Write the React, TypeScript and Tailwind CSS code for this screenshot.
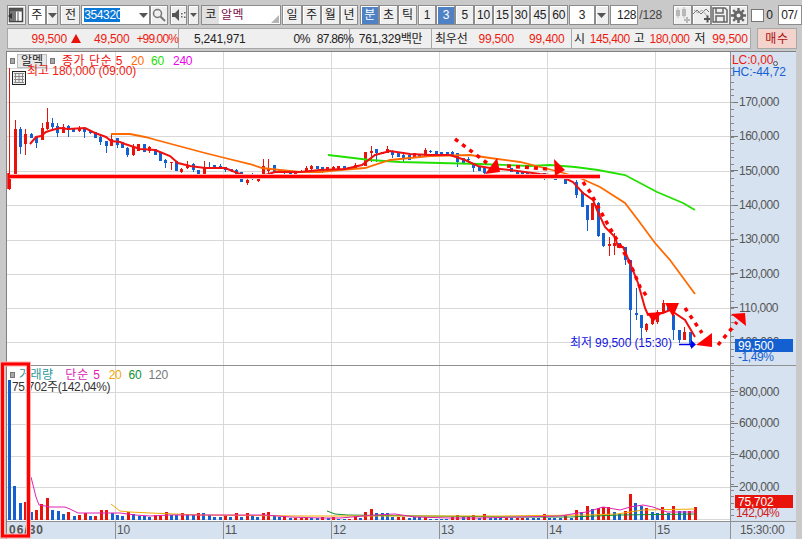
import React from "react";

const RED = "#e8140c";
const BLUE = "#1560d0";
const F = "font-['Liberation_Sans','Noto_Sans_CJK_KR',sans-serif]";

// x, bodyTop, bodyBottom, wickTop, wickBottom, r=red b=blue
type C = [number, number, number, number, number, "r" | "b"];
const candles: C[] = [
  [9,175,189,68,190,"r"],[14.5,129,175,120,177,"r"],[19.5,129,147,127,154,"b"],[25,134,144,129,155,"r"],[30.5,134,138,133,138,"b"],
  [36,137,143,136,148,"b"],[41.5,128,140,123,138,"r"],[46.5,122,129,108,130,"r"],[52,123,127,118,131,"b"],[57,126,133,123,137,"b"],
  [63,127,133,124,133,"r"],[68,126,130,125,137,"b"],[73,129,132,128,132,"b"],[79,128,131,126,132,"r"],[84,129,132,128,138,"b"],
  [90,131,133,130,134,"b"],[95,132,138,132,138,"b"],[100,137,142,136,145,"b"],[106,141,146,141,153,"b"],[111,139,146,135,146,"r"],
  [117,138,145,138,148,"b"],[122,142,148,142,148,"b"],[127,148,155,147,157,"b"],[133,147,155,144,156,"r"],[138,144,151,144,151,"r"],
  [144,144,152,144,152,"b"],[149,147,151,146,153,"r"],[155,149,155,149,155,"b"],[160,152,161,152,161,"b"],[165,160,163,159,168,"b"],
  [171,162,163,162,170,"r"],[176,161,171,161,171,"b"],[181,169,172,168,173,"r"],[187,165,168,161,169,"r"],[193,164,170,163,172,"b"],
  [198,170,174,170,174,"b"],[204,168,175,161,175,"r"],[209,167,169,162,169,"b"],[214,165,169,165,169,"b"],[220,166,169,164,169,"b"],
  [225,167,170,167,172,"b"],[231,169,171,169,172,"b"],[236,170,174,169,178,"b"],[241,172,182,172,182,"b"],[247,180,183,178,185,"r"],
  [252,176,177,173,180,"b"],[258,176,181,175,182,"r"],[263,166,176,159,178,"r"],[268,168,171,159,175,"r"],[274,165,172,165,172,"b"],
  [279,170,172,170,172,"r"],[284,171,173,170,175,"b"],[290,172,175,172,175,"b"],[295,173,175,172,175,"r"],[301,171,173,170,173,"r"],
  [306,168,173,166,173,"r"],[311,166,169,165,170,"r"],[317,166,169,166,169,"b"],[322,167,172,167,173,"b"],[327,167,171,167,171,"r"],
  [333,167,171,166,171,"r"],[338,166,169,166,169,"r"],[344,166,170,166,170,"b"],[349,167,169,167,169,"r"],[355,165,168,163,168,"r"],
  [365,152,166,152,166,"r"],[371,151,153,146,162,"r"],[376,149,153,149,162,"b"],[382,152,154,152,154,"r"],[387,149,153,146,153,"r"],
  [392,151,155,150,158,"b"],[398,152,157,152,157,"b"],[403,155,158,153,162,"b"],[409,155,160,155,160,"b"],[414,153,158,153,158,"r"],
  [419,154,157,154,157,"b"],[425,150,156,148,156,"r"],[430,151,152,150,153,"b"],[436,151,155,151,155,"b"],[441,152,156,152,156,"b"],
  [447,152,156,152,156,"b"],[452,152,155,151,156,"b"],[457,153,162,153,167,"b"],[463,158,163,158,163,"b"],[468,159,160,157,164,"b"],
  [473,163,168,163,172,"b"],[479,167,171,167,171,"b"],[484,168,173,168,175,"b"],[511,168,172,168,172,"b"],[517,172,174,172,174,"b"],
  [522,172,174,172,174,"b"],[527,172,174,172,174,"b"],[544,173,175,173,180,"b"],[555,177,180,177,180,"b"],[565,178,184,178,184,"b"],
  [576,182,195,180,198,"b"],[582,192,207,192,207,"b"],[587,205,220,205,231,"b"],[592,203,220,203,220,"r"],[598,203,236,202,237,"b"],
  [603,233,246,233,247,"b"],[609,244,246,237,256,"r"],[614,243,246,233,255,"r"],[619,243,248,243,248,"b"],[625,247,260,247,265,"b"],
  [630,260,310,260,340,"b"],[636,313,315,288,320,"b"],[641,315,328,315,338,"b"],[646,324,330,323,332,"r"],[652,315,324,313,325,"r"],
  [657,312,322,310,324,"r"],[663,303,313,300,313,"r"],[668,304,310,303,310,"b"],[673,315,330,310,340,"b"],[679,330,340,330,343,"b"],
  [684,332,340,327,340,"r"],[690,332,345,332,347,"b"],
];

const vol: number[] = [
  -140,-34,-17,18,-8,10,16,22,-10,-9,-6,8,-4,5,7,-4,4,10,10,-7,-5,-4,8,-6,-4,-4,-3,5,4,8,-5,-5,7,-5,-5,7,-7,-5,-3,-3,4,-3,7,
  -3,7,-4,-3,7,8,-4,-3,4,-2,2,2,2,-2,-2,3,-2,3,-1,-1,1,4,-2,8,11,-7,-7,-7,-3,3,3,-2,-3,-3,3,-1,-1,-1,-1,3,5,-3,3,5,-2,6,-2,-2,-2,2,-2,2,
  2,-2,-2,-2,6,-2,-2,-2,5,-2,10,-8,14,-11,12,13,13,-8,-6,9,26,-17,-14,12,-8,-7,13,-7,14,-9,-9,9,13,
];

const ma5 = "30,144 36,137 41,136 46,132 52,130 60,128 68,129 85,128 95,133 106,137 111,141 120,142 125,144 140,149 155,150 160,152 170,156 178,163 190,166 205,168 225,168 240,174 250,177 262,176 275,172 290,172 300,172 320,170 345,169 362,165 375,155 390,151 410,154 430,155 450,155 465,160 478,166 490,168 510,170 540,174 560,176 573,182 583,193 593,200 597,210 605,227 615,237 618,247 623,247 630,263 638,283 645,308 648,315 663,313 670,310 685,320 695,337";
const ma20 = "111,134 130,134 145,137 160,141 175,145 190,149 205,153 225,158 250,164 262,168 280,170 300,172 320,172 340,170 365,168 390,160 410,158 430,156 470,155 490,158 520,162 560,172 580,178 600,187 625,203 638,220 655,243 670,260 695,294";
const ma60 = "328,155 345,157 370,160 400,162 440,163 480,164 530,166 550,165 575,167 598,170 625,175 657,192 683,203 695,210";

const vm5 = "31,477 36,497 39,505 45,506 50,507 65,507 70,509 78,513 120,513 135,515 150,516 170,515 240,515 265,515 290,517 320,518 340,518 375,515 395,514 415,517 450,518 480,518 520,517 560,516 578,513 587,512 603,507 620,510 630,507 643,505 653,507 667,512 695,512";
const vm20 = "111,504 120,511 130,512 150,513 200,515 300,516 400,516 500,516 587,515 617,514 643,510 695,509";
const vm60 = "327,511 335,514 347,515 423,516 520,517 570,517 620,515 695,514";

const Btn = ({ w, children, active, className = "" }: { w: string; children?: React.ReactNode; active?: boolean; className?: string }) => (
  <div className={`${w} h-full flex items-center justify-center border border-[#8c8c8c] shadow-[inset_1px_1px_0_#fff] ${active ? "bg-[#4f82c4] text-white" : "bg-[#efefef] text-[#222]"} ${className}`}>
    {children}
  </div>
);

const Down = () => (
  <svg width="9" height="5" viewBox="0 0 9 5"><path d="M0 0h9L4.5 5z" fill="#555" /></svg>
);

const R = ({ children, className = "" }: { children: React.ReactNode; className?: string }) => (
  <span className={`text-[#ee1a10] ${className}`}>{children}</span>
);

const priceTicks = Array.from({ length: 44 }, (_, i) => 16 + i * 6.86);
const volTicks = Array.from({ length: 24 }, (_, i) => 4 + i * 6.32);

export default function App() {
  const prices = ["170,000", "160,000", "150,000", "140,000", "130,000", "120,000", "110,000", "100,000"];
  return (
    <div className={`relative w-[802px] h-[539px] overflow-hidden bg-[#c9c9c9] text-[12px] leading-none tracking-[-0.2px] ${F}`}>
      {/* toolbar */}
      <div className="flex h-[20px] mt-[5px] ml-[7px] items-stretch">
        <Btn w="w-[19px]">
          <svg width="16" height="16" viewBox="0 0 16 16"><rect x="1.5" y="1.5" width="13" height="13" fill="#fff" stroke="#444" strokeWidth="1.5" /><rect x="1.5" y="1.5" width="13" height="3" fill="#555" /><rect x="2" y="4" width="6" height="10" fill="#777" /><path d="M0 9l4-3v6z" fill="#333" /><path d="M10 5v9" stroke="#555" /></svg>
        </Btn>
        <Btn w="w-[18px] ml-[2px] bg-white!">주</Btn>
        <Btn w="w-[13px]"><Down /></Btn>
        <Btn w="w-[20px] ml-[2px]">전</Btn>
        <div className="w-[69px] ml-[1px] bg-white border border-[#8c8c8c] flex items-center pl-[2px] justify-between">
          <span className="bg-[#0a78d7] text-white h-[14px] flex items-center w-[36px] tracking-[-0.4px]">354320</span>
          <span className="w-[11px] flex justify-center"><Down /></span>
        </div>
        <Btn w="w-[19px]">
          <svg width="14" height="14" viewBox="0 0 14 14" fill="none" stroke="#777" strokeWidth="1.5"><circle cx="5.5" cy="5.5" r="4" /><path d="M8.5 8.5l4.5 4.5" strokeWidth="2" /></svg>
        </Btn>
        <Btn w="w-[17px] ml-[2px]">
          <svg width="14" height="12" viewBox="0 0 14 12"><path d="M0 4h3l4-4v12L3 8H0z" fill="#555" /><path d="M9 4h1.5v1.5H9zM12 3h1.500v1.500H12zM9 7h1.500v1.500H9zM12 7.500h1.500V9H12z" fill="#666" /></svg>
        </Btn>
        <Btn w="w-[11px] ml-[1px]"><svg width="7" height="4" viewBox="0 0 9 5"><path d="M0 0h9L4.5 5z" fill="#555" /></svg></Btn>
        <div className="relative w-[81px] ml-[2px] bg-white border border-[#8c8c8c] flex items-center">
          <span className="w-[17px] h-full bg-[#e0e0e0] flex items-center justify-center text-[#222]">코</span>
          <span className="ml-[2px] text-[#7a0f48] tracking-[0.4px]">알멕</span>
          <svg className="absolute right-[1px] bottom-[1px]" width="8" height="8" viewBox="0 0 8 8"><path d="M8 0v8H0z" fill="#b5b5b5" /></svg>
        </div>
        <Btn w="w-[20px] ml-[1px]">일</Btn>
        <Btn w="w-[19px]">주</Btn>
        <Btn w="w-[19px]">월</Btn>
        <Btn w="w-[19px]">년</Btn>
        <Btn w="w-[19px] ml-[2px]" active>분</Btn>
        <Btn w="w-[19px]">초</Btn>
        <Btn w="w-[19px]">틱</Btn>
        <div className="w-px" />
        {["1", "3", "5", "10", "15", "30", "45", "60"].map((t) => (
          <Btn key={t} w="w-[19px]" active={t === "3"}>{t}</Btn>
        ))}
        <div className="w-[26px] ml-[1px] bg-white border border-[#8c8c8c] flex items-center justify-center text-[#222]">3</div>
        <Btn w="w-[14px]"><Down /></Btn>
        <div className="w-[29px] ml-[1px] bg-white border border-[#8c8c8c] flex items-center justify-end pr-[1px] text-[#222]">128</div>
        <span className="w-[33px] flex items-center pl-[1px] text-[#444]">/128</span>
        <Btn w="w-[19px] ml-[2px]">
          <svg width="16" height="16" viewBox="0 0 16 16" fill="#b8b8b8"><rect x="2" y="3" width="4" height="6" /><rect x="8" y="2" width="4" height="7" /><path d="M3.500 1h1v10h-1zM9.500 0h1v11h-1z" /><path d="M10 12h2v-2h2v2h2v2h-2v2h-2v-2h-2z" /></svg>
        </Btn>
        <Btn w="w-[19px]">
          <svg width="17" height="16" viewBox="0 0 17 16"><path d="M0 7l4-4 4 4 5-5 3 3" fill="none" stroke="#777" /><path d="M1 3l4 3 4-3 5 6" fill="none" stroke="#aaa" /><path d="M11 11h2.500V8.500h2V11H18v2h-2.500v2.500h-2V13H11z" fill="#555" /></svg>
        </Btn>
        <Btn w="w-[19px]">
          <svg width="16" height="16" viewBox="0 0 16 16" fill="none" stroke="#666" strokeWidth="1.500"><path d="M1 1h12l2 2v12H1z" /><path d="M4 1v5h7V1M4 15V9h8v6" /></svg>
        </Btn>
        <Btn w="w-[19px]">
          <svg width="15" height="15" viewBox="0 0 15 15"><circle cx="7.500" cy="7.500" r="3.500" fill="none" stroke="#666" strokeWidth="3" /><path d="M7.500 0v3M7.500 12v3M0 7.500h3M12 7.500h3M2.200 2.200l2 2M10.800 10.800l2 2M2.200 12.800l2-2M10.800 4.200l2-2" stroke="#666" strokeWidth="2.400" /></svg>
        </Btn>
        <div className="w-[13px] h-[13px] ml-[3px] self-center bg-white border border-[#777]" />
        <span className="w-[10px] ml-[2px] flex items-center text-[#222]">0</span>
        <div className="w-[24px] ml-[2px] bg-white border border-[#8c8c8c] flex items-center pl-[2px] overflow-hidden text-[#222]">07/</div>
      </div>

      {/* info row */}
      <div className="flex h-[21px] mt-[3px] ml-[7px] items-stretch">
        <div className="w-[744px] flex bg-[#efefef] border border-[#a8a8a8] whitespace-nowrap">
          <div className="w-[171px] flex items-center border-r border-[#a8a8a8] text-[#ee1a10]">
            <span className="w-[59px] text-right">99,500</span>
            <svg className="ml-[4px]" width="10" height="9" viewBox="0 0 10 9"><path d="M5 0l5 9H0z" fill={RED} /></svg>
            <span className="ml-[13px]">49,500</span>
            <span className="ml-[7px] tracking-[-0.9px]">+99.00%</span>
          </div>
          <div className="w-[171px] flex items-center border-r border-[#a8a8a8] text-[#222]">
            <span className="ml-[15px]">5,241,971</span>
            <span className="ml-[48px] tracking-[-0.6px]">0%</span>
            <span className="ml-[7px] tracking-[-0.7px]">87.86%</span>
          </div>
          <div className="w-[82px] flex items-center justify-center border-r border-[#a8a8a8] text-[#222]">761,329백만</div>
          <div className="w-[140px] flex items-center border-r border-[#a8a8a8]">
            <span className="ml-[3px] text-[#222]">최우선</span>
            <R className="ml-[11px]">99,500</R>
            <R className="ml-[15px]">99,400</R>
          </div>
          <div className="flex-1 flex items-center text-[#222]">
            <span className="ml-[2px]">시</span>
            <R className="ml-[5px] tracking-[-0.5px]">145,400</R>
            <span className="ml-[4px]">고</span>
            <R className="ml-[5px] tracking-[-0.5px]">180,000</R>
            <span className="ml-[5px]">저</span>
            <R className="ml-[7px]">99,500</R>
          </div>
        </div>
        <div className="w-[40px] ml-[6px] bg-[#f3d3cc] border border-[#a8a8a8] flex items-center justify-center text-[#b01010] tracking-[0.6px]">매수</div>
      </div>

      {/* chart frame */}
      <div className="mt-[2px] ml-[6px] w-[790px] h-[488px] flex flex-col border-l border-t border-[#808080] bg-white">
        {/* price row */}
        <div className="flex h-[314px] border-b border-[#909090]">
          <div className="relative w-[723px] bg-white">
            <svg className="block" width="723" height="313" viewBox="7 52 723 313">
              {[68, 102, 136, 171, 205, 240, 274, 308, 342].map((y) => <path key={y} d={`M7 ${y + 0.5}H730`} stroke="#d8d8d8" />)}
              {[115, 223, 331, 439, 547, 655].map((x) => <path key={x} d={`M${x + 0.5} 52V365`} stroke="#d8d8d8" />)}
              {candles.map(([x, t, b, wt, wb, c], i) => {
                const col = c === "r" ? RED : BLUE;
                const px = Math.round(x);
                return (
                  <g key={i}>
                    <path d={`M${px + 0.5} ${wt}V${wb}`} stroke={col} />
                    <rect x={px - 1} y={t} width="3" height={Math.max(b - t, 1)} fill={col} />
                  </g>
                );
              })}
              <polyline points={ma60} fill="none" stroke="#22e000" strokeWidth="1.800" />
              <polyline points={ma20} fill="none" stroke="#ff6a00" strokeWidth="1.800" />
              <polyline points={ma5} fill="none" stroke="#f01010" strokeWidth="2" />
              <path d="M679 344.500H692" stroke="#0000f0" strokeWidth="1.500" />
              <path d="M691 340v9l5-4.500z" fill="#0000f0" />
            </svg>
            <div className="absolute left-[3px] top-[2px] flex items-center h-[14px] whitespace-nowrap tracking-normal">
              <span className="w-[5px] h-[6px] bg-[#a8a8a8] border border-[#777]" />
              <span className="ml-[2px] w-[30px] justify-center bg-[#e8e8e8] border border-[#bbb] h-[14px] flex items-center text-[#222]">알멕</span>
              <span className="w-[5px] h-[6px] ml-[3px] bg-[#a8a8a8] border border-[#777]" />
              <span className="ml-[7px] text-[#f01010] tracking-[0.5px]">종가 단순 5</span>
              <span className="ml-[8px] text-[#ff6a00] tracking-[-0.2px]">20</span>
              <span className="ml-[7px] text-[#22e000] tracking-[-0.2px]">60</span>
              <span className="ml-[9px] text-[#f000f0] tracking-[-0.2px]">240</span>
            </div>
            <div className="absolute left-[20px] top-[13px] text-[#ee1a10] whitespace-nowrap tracking-[-0.05px]">최고 180,000 (09:00)</div>
            <div className="absolute left-[5px] top-[19px] w-[14px] h-[14px] bg-[#efefef] border border-[#222] flex items-center justify-center">
              <svg width="10" height="10" viewBox="0 0 10 10" fill="none" stroke="#888"><path d="M0 .5h10M0 3.500h10M0 6.500h10M0 9.500h10M1.500 0v10M5 0v10M8.500 0v10" /></svg>
            </div>
            <div className="absolute left-[563px] top-[285px] text-[#1212e0] whitespace-nowrap tracking-[-0.1px]">최저 99,500 (15:30)</div>
          </div>
          <div className="relative flex-1 border-l border-[#909090] bg-[#d6e2f0] text-[#555]">
            <svg className="absolute left-0 top-0" width="5" height="313" viewBox="0 0 5 313">
              {priceTicks.map((y) => <path key={y} d={`M0 ${Math.round(y) + 0.5}H3`} stroke="#888" />)}
            </svg>
            <div className="text-[#ee1a10] h-[12px] mt-[2px] ml-[1px] tracking-[-0.1px]">LC:0,00</div>
            <div className="text-[#1560d0] h-[12px] ml-[1px] tracking-[-0.1px]">HC:-44,72</div>
            <div className="mt-[7px] flex flex-col">
              {prices.map((p) => (
                <div key={p} className="h-[34.3px] flex items-center">
                  <span className="w-[7px] h-px bg-[#777] mr-[1px]" />
                  <span className="tracking-[-0.5px]">{p}</span>
                </div>
              ))}
            </div>
            <div className="absolute left-[4px] top-[287px] w-[58px] h-[13px] bg-[#1560d0] text-white flex items-center pl-[3px]">99,500</div>
            <div className="absolute left-[7px] top-[299px] text-[#1560d0] tracking-[-0.4px]">-1,49%</div>
          </div>
        </div>

        {/* volume row */}
        <div className="flex h-[155px]">
          <div className="relative w-[723px] bg-white">
            <svg className="block" width="723" height="155" viewBox="7 366 723 155">
              {[392, 424, 456, 487, 519].map((y) => <path key={y} d={`M7 ${y + 0.5}H730`} stroke="#d8d8d8" />)}
              {[115, 223, 331, 439, 547, 655].map((x) => <path key={x} d={`M${x + 0.5} 366V521`} stroke="#d8d8d8" />)}
              {vol.map((v, i) => {
                const h = Math.abs(v);
                return <rect key={i} x={Math.round(8 + i * 5.4)} y={520 - h} width="3" height={h} fill={v > 0 ? RED : BLUE} />;
              })}
              <polyline points={vm60} fill="none" stroke="#109030" strokeWidth="1" />
              <polyline points={vm20} fill="none" stroke="#f0a800" strokeWidth="1" />
              <polyline points={vm5} fill="none" stroke="#e020b0" strokeWidth="1" />
            </svg>
            <div className="absolute left-[3px] top-[2px] flex items-center h-[14px] whitespace-nowrap tracking-normal">
              <span className="w-[5px] h-[6px] bg-[#a8a8a8] border border-[#777]" />
              <span className="ml-[4px] text-[#2a9a9a] tracking-[0.4px]">거래량</span>
              <span className="ml-[12px] text-[#e020b0] tracking-[0.8px]">단순 5</span>
              <span className="ml-[8px] text-[#f0a800] tracking-[-0.2px]">20</span>
              <span className="ml-[7px] text-[#109030] tracking-[-0.2px]">60</span>
              <span className="ml-[7px] text-[#777] tracking-[-0.2px]">120</span>
            </div>
            <div className="absolute left-[5px] top-[15px] text-[#333] whitespace-nowrap tracking-[-0.3px]">75,702주(142,04%)</div>
          </div>
          <div className="relative flex-1 border-l border-[#909090] bg-[#d6e2f0] text-[#555]">
            <svg className="absolute left-0 top-0" width="5" height="155" viewBox="0 0 5 155">
              {volTicks.map((y) => <path key={y} d={`M0 ${Math.round(y) + 0.5}H3`} stroke="#888" />)}
            </svg>
            <div className="mt-[10px] flex flex-col">
              {["800,000", "600,000", "400,000", "200,000"].map((p) => (
                <div key={p} className="h-[31.6px] flex items-center">
                  <span className="w-[7px] h-px bg-[#777] mr-[1px]" />
                  <span className="tracking-[-0.5px]">{p}</span>
                </div>
              ))}
            </div>
            <div className="absolute left-[4px] top-[129px] w-[58px] h-[13px] bg-[#e8140c] text-white flex items-center pl-[3px]">75,702</div>
            <div className="absolute left-[5px] top-[141px] text-[#d02020] tracking-[-0.6px]">142,04%</div>
          </div>
        </div>

        {/* x axis */}
        <div className="flex-1 flex border-t border-[#909090] bg-[#d6e2f0] text-[#555] whitespace-nowrap">
          <div className="w-[108px] pl-[2px] pt-[2px] font-bold text-[#555] tracking-[1px]">06/30</div>
          {["10", "11", "12", "13", "14"].map((t) => (
            <div key={t} className="w-[108px] border-l border-[#909090] pl-[1px] pt-[2px]">{t}</div>
          ))}
          <div className="w-[75px] border-l border-[#909090] pl-[1px] pt-[2px]">15</div>
          <div className="flex-1 border-l border-[#909090] pl-[9px] pt-[2px] tracking-[-0.3px]">15:30:00</div>
        </div>
      </div>

      {/* hand-drawn annotations over the chart */}
      <svg className="absolute left-0 top-0 pointer-events-none" width="802" height="539" viewBox="0 0 802 539">
        <path d="M8 176.500H600" stroke="#ffb0b0" strokeWidth="5" />
        <path d="M8 176.500H600" stroke="#ff0000" strokeWidth="3" />
        <path d="M8.500 173V189" stroke="#ff0000" strokeWidth="2.500" />
        <g fill="none" stroke="#ff0000" strokeWidth="3.500" strokeDasharray="4 5">
          <path d="M455 139L487 163" />
          <path d="M507 166L548 169" />
          <path d="M583 182L590 192 607 223 617 240 630 263 640 287 648 298" />
          <path d="M685 308L702 333" />
          <path d="M718 345L737 322" />
        </g>
        <g fill="#ff0000">
          <path d="M485 174L497 158 500 172z" />
          <path d="M554 159L565 170 555 176z" />
          <path d="M647 313L663 312 653 322z" />
          <path d="M665 303L679 303 673 317z" />
          <path d="M696 345L712 333 712 347z" />
          <path d="M731 314L745 313 746 326z" />
        </g>
        <circle cx="775.500" cy="63.500" r="2" fill="none" stroke="#555" />
        <rect x="2.500" y="364" width="26" height="172" fill="none" stroke="#ffb0b0" strokeWidth="5" />
        <rect x="2.500" y="364" width="26" height="172" fill="none" stroke="#ff0000" strokeWidth="3" />
      </svg>
    </div>
  );
}
